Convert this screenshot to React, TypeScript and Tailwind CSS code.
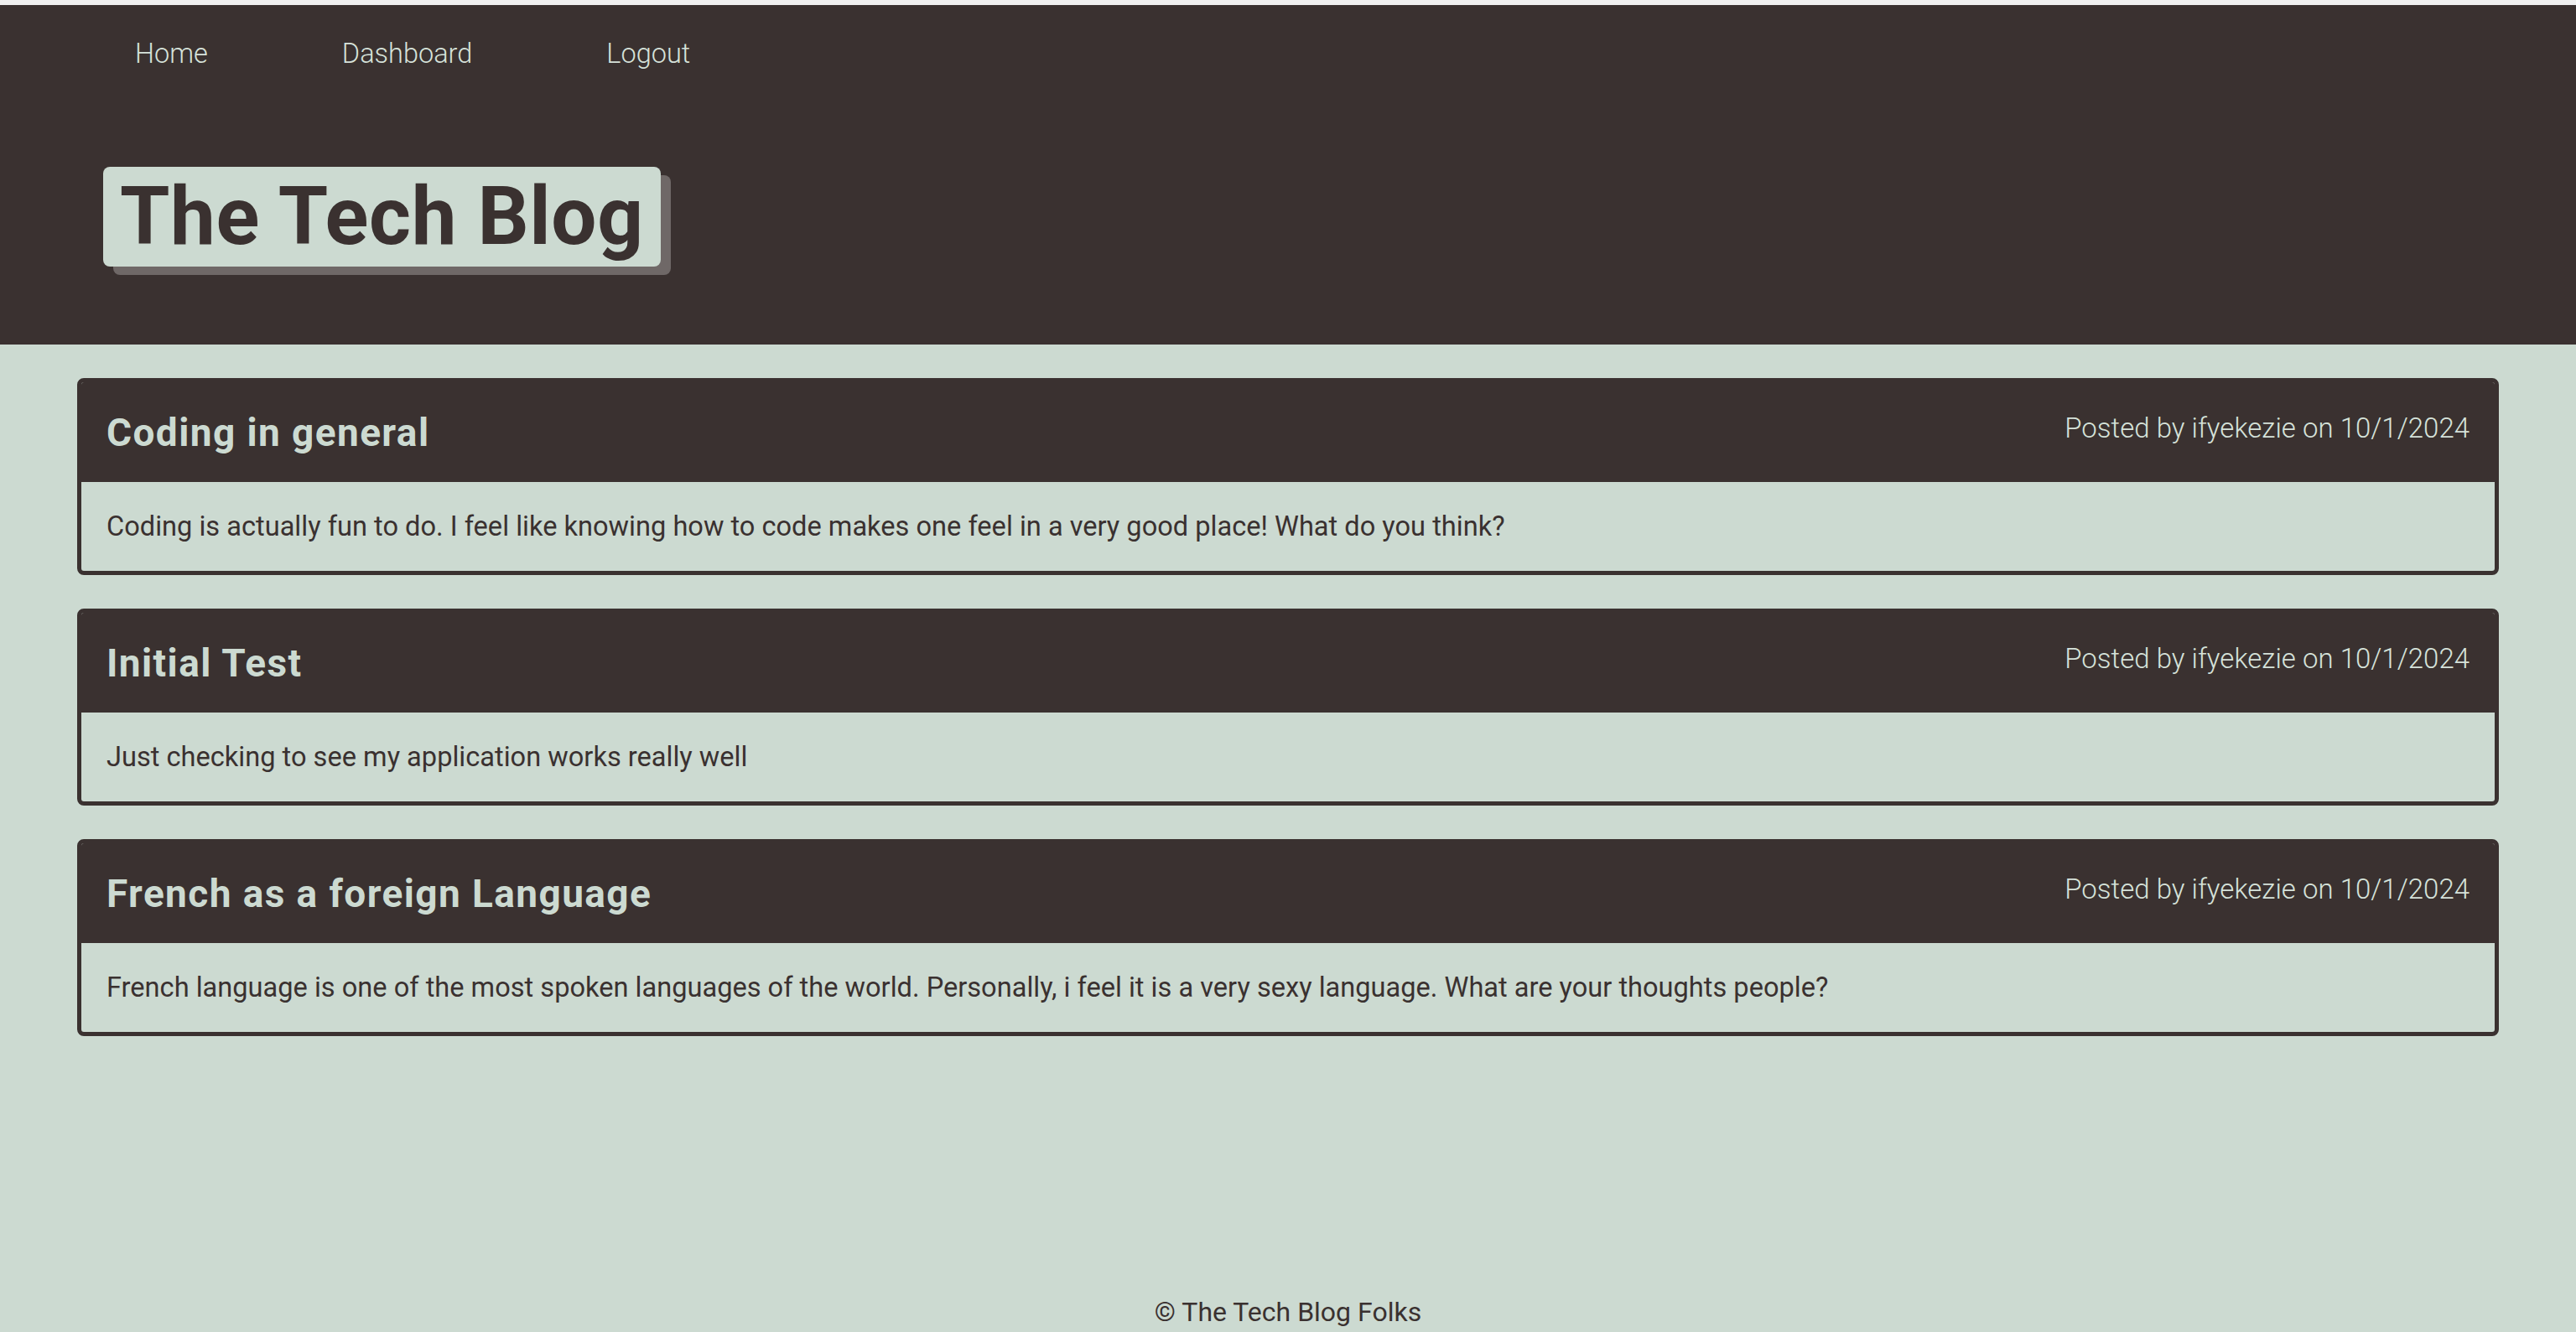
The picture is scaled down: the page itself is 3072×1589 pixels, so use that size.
const posts = [
  {
    title: "Coding in general",
    author: "ifyekezie",
    date: "10/1/2024",
    body: "Coding is actually fun to do. I feel like knowing how to code makes one feel in a very good place! What do you think?",
  },
  {
    title: "Initial Test",
    author: "ifyekezie",
    date: "10/1/2024",
    body: "Just checking to see my application works really well",
  },
  {
    title: "French as a foreign Language",
    author: "ifyekezie",
    date: "10/1/2024",
    body: "French language is one of the most spoken languages of the world. Personally, i feel it is a very sexy language. What are your thoughts people?",
  },
];

function PostCard({ post }: { post: (typeof posts)[number] }) {
  return (
    <div className="border-[5px] border-[#3a3130] rounded-[8px] overflow-hidden">
      <div className="bg-[#3a3130] h-[119px] px-[30px] flex items-center justify-between">
        <h2 className="text-[46px] font-bold tracking-[1.4px] text-[#ccdad1] leading-none">{post.title}</h2>
        <p className="text-[33px] font-light text-[#d6e2da] leading-none -mt-[10px]">
          Posted by {post.author} on {post.date}
        </p>
      </div>
      <div className="h-[106px] px-[30px] flex items-center">
        <p className="text-[32.6px] leading-none">{post.body}</p>
      </div>
    </div>
  );
}

export default function App() {
  return (
    <div className="min-h-screen flex flex-col bg-[#ccdad1] text-[#3a3130] font-['Roboto',sans-serif]">
      <div className="h-[6px] bg-[#f0f0f0]" />
      <header className="bg-[#3a3130] h-[405px]">
        <nav className="flex pl-[81px] pt-[34px]">
          <a className="px-[80px] text-[32.5px] leading-[48px] font-light text-[#d6e2da]">Home</a>
          <a className="px-[80px] text-[32.5px] leading-[48px] font-light text-[#d6e2da]">Dashboard</a>
          <a className="px-[80px] text-[32.5px] leading-[48px] font-light text-[#d6e2da]">Logout</a>
        </nav>
        <div className="pl-[123px] pt-[111px]">
          <h1 className="inline-block bg-[#ccdad1] rounded-[8px] px-[20px] text-[96px] font-bold leading-[119px] tracking-[0.6px] shadow-[12px_10px_0_#6f6867]">
            The Tech Blog
          </h1>
        </div>
      </header>
      <main className="flex-1 px-[92px] pt-[40px] flex flex-col gap-[40px]">
        {posts.map((post) => (
          <PostCard key={post.title} post={post} />
        ))}
      </main>
      <footer className="text-center text-[32px] leading-[48px]">© The Tech Blog Folks</footer>
    </div>
  );
}
